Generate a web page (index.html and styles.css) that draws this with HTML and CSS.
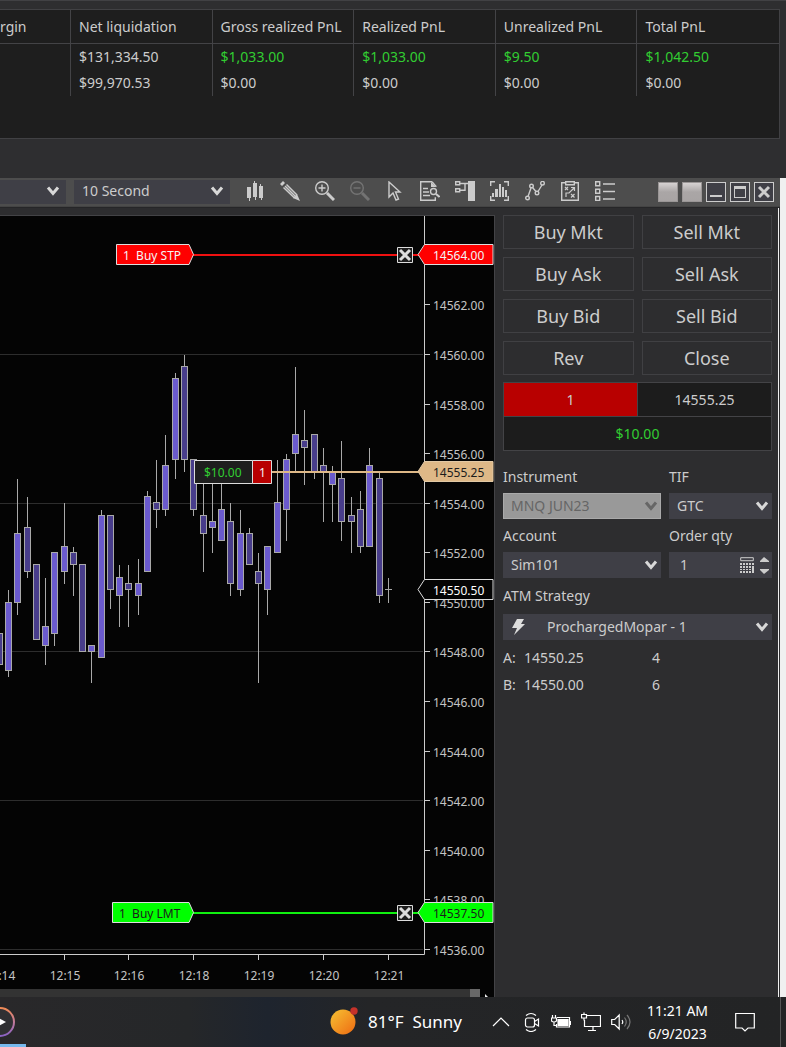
FILE: index.html
```html
<!DOCTYPE html>
<html lang="en">
<head>
<meta charset="utf-8">
<title>Chart Trader</title>
<link rel="stylesheet" href="styles.css">
</head>
<body>
<div class="desktop">
  <section class="accounts">
    <div class="accounts-box">
      <table class="accounts-table">
        <colgroup><col class="col-first"><col><col><col><col><col></colgroup>
        <thead><tr><th>rgin</th><th>Net liquidation</th><th>Gross realized PnL</th><th>Realized PnL</th><th>Unrealized PnL</th><th>Total PnL</th></tr></thead>
        <tbody>
          <tr><td></td><td>$131,334.50</td><td class="gain">$1,033.00</td><td class="gain">$1,033.00</td><td class="gain">$9.50</td><td class="gain">$1,042.50</td></tr>
          <tr><td></td><td>$99,970.53</td><td>$0.00</td><td>$0.00</td><td>$0.00</td><td>$0.00</td></tr>
        </tbody>
      </table>
    </div>
  </section>

  <div class="stage">
    <main class="window">
      <header class="toolbar">
        <span class="picker picker-symbol"><select aria-label="Instrument selector"><option></option></select><svg class="chev" viewBox="0 0 12 10"><path d="M1 1.500l5 6 5-6"/></svg></span>
        <span class="picker picker-interval"><select aria-label="Interval"><option>10 Second</option></select><svg class="chev" viewBox="0 0 12 10"><path d="M1 1.500l5 6 5-6"/></svg></span>
        <div class="tools">
          <button aria-label="Chart style"><svg viewBox="0 0 20 20"><path class="fill" d="M2 6h4v11H5v3H4v-3H2zM8 2h1V0h1v2h2v14h-1v3h-1v-3H8zM15 3h1v2h2v12h-1v2h-1v-2h-2V5h1z"/></svg></button>
          <button aria-label="Drawing tools"><svg viewBox="0 0 20 20"><path d="M3.500 6.500L14.500 17M6.500 3.500L17 14M5 5l11 11" stroke-width="1.500"/><path class="fill" d="M0 3l3-3 2 2-3 3zM17 13l3 7-7-3z"/></svg></button>
          <button aria-label="Zoom in"><svg viewBox="0 0 20 20"><circle cx="7" cy="7" r="6.300"/><path d="M7 3.500v7M3.500 7h7"/><path d="M12 12l7 7" stroke-width="3"/></svg></button>
          <button aria-label="Zoom out" disabled><svg viewBox="0 0 20 20"><circle cx="7" cy="7" r="6.300"/><path d="M3.500 7h7"/><path d="M12 12l7 7" stroke-width="3"/></svg></button>
          <button aria-label="Cursor"><svg viewBox="0 0 20 20"><path d="M4 1v15l4-4 3 7 2.500-1-3-7H15z"/></svg></button>
          <button aria-label="Data box"><svg viewBox="0 0 20 20"><path d="M12 .700H.700v18.600h14.600v-3M12 .700l4.300 5"/><path class="fill" d="M11 1l5 5h-5z"/><path d="M3 7.500h5M3 11h6M3 14.500h7"/><circle cx="13.500" cy="10.500" r="3"/><path d="M16 13l3.500 3" stroke-width="2"/></svg></button>
          <button aria-label="Chart trader"><svg viewBox="0 0 20 20"><path d="M.700.700h4v3h-4zM.700 7.700h4v3h-4zM5 2.500h8M5 9.300h5V3"/><path class="fill" d="M13 0h7v20h-7z"/></svg></button>
          <button aria-label="Data series"><svg viewBox="0 0 20 20"><path d="M.700 5V.700H5M14 .700h4.300V5M.700 15v4.300H5M14 19.300h4.300V15"/><path class="fill" d="M2 12h2v4H2zM5 8h3v8H5zM9 3h2v13H9zM12 6h2v10h-2zM15 9h2v7h-2z"/></svg></button>
          <button aria-label="Indicators"><svg viewBox="0 0 20 20"><circle cx="2.500" cy="17" r="1.800"/><circle cx="6.500" cy="5" r="1.800"/><circle cx="12" cy="12" r="1.800"/><circle cx="17.500" cy="2.200" r="1.800"/><path d="M3.200 15L6 7M7.500 6.500l3.500 4M13 10.500l4-6.500"/></svg></button>
          <button aria-label="Strategies"><svg viewBox="0 0 20 20"><path d="M5 1.700H1.700v17.600h16.600V1.700H15M5.700.700h8.600v3H5.700z"/><path d="M5 6l3 3M8 6L5 9M11 13l3.500 3.500M14.500 13L11 16.500M6 16v-4h3l5-5M11 6.500h3.500V10" stroke-width="1.200"/></svg></button>
          <button aria-label="Properties"><svg viewBox="0 0 20 20"><path d="M.700.700h4v4h-4zM.700 8.200h4v4h-4zM.700 15.500h4v4h-4zM8 3h12M8 10.500h12M8 18h12"/></svg></button>
        </div>
        <div class="window-buttons">
          <button class="link" aria-label="Instrument link"></button>
          <button class="link" aria-label="Interval link"></button>
          <button class="frame" aria-label="Minimize"><svg viewBox="0 0 18 18"><path class="fill" d="M3 12h12v2H3z"/></svg></button>
          <button class="frame" aria-label="Maximize"><svg viewBox="0 0 18 18"><path class="fill" fill-rule="evenodd" d="M3 3h12v12H3zM4 6v8h10V6z"/></svg></button>
          <button class="frame" aria-label="Close window"><svg viewBox="0 0 18 18"><path d="M4 4l10 10M14 4L4 14" stroke-width="3"/></svg></button>
        </div>
      </header>

      <div class="workspace">
        <section class="chart">
          <svg class="plot" viewBox="0 216 494 773" preserveAspectRatio="xMaxYMin slice" role="img" aria-label="Price chart">
            <g id="grid"></g>
            <g id="candles"></g>
            <path class="axis" d="M424.500 216V954.500H0"/>
            <g id="axis-labels"></g>
            <path class="last-tag" d="M418 589.500l6.500-10H493v20h-68.500z"/>
            <text class="last-text" x="433" y="595">14550.50</text>

            <path class="stop-line" d="M193 255H419"/>
            <path class="stop-tag" d="M116.500 244.500h72.500l4.500 10-4.500 10h-72.500z"/>
            <text class="light-text" x="123" y="260">1&#160; Buy STP</text>
            <path class="stop-tag" d="M418 254.500l6.500-10H493v20h-68.500z"/>
            <text class="light-text" x="433" y="260">14564.00</text>
            <g class="cancel"><path class="cancel-box" d="M397.500 247.500h15v15h-15z"/><path d="M400 250l10 10M410 250l-10 10"/></g>

            <path class="position-line" d="M272 472H419"/>
            <path class="position-box" d="M194.500 460.500h58v23h-58z"/>
            <path class="position-qty" d="M252.500 460.500h19v23h-19z"/>
            <text class="gain-text" x="204" y="477">$10.00</text>
            <text class="light-text" x="259" y="477">1</text>
            <path class="position-tag" d="M418 471.500l6.500-10H493v20h-68.500z"/>
            <text class="dark-text" x="433" y="477">14555.25</text>

            <path class="limit-line" d="M193 913H419"/>
            <path class="limit-tag" d="M112.500 902.500h76.500l4.500 10-4.500 10h-76.500z"/>
            <text class="dark-text" x="119" y="918">1&#160; Buy LMT</text>
            <path class="limit-tag" d="M418 912.500l6.500-10H493v20h-68.500z"/>
            <text class="dark-text" x="433" y="918">14537.50</text>
            <g class="cancel"><path class="cancel-box" d="M397.500 905.500h15v15h-15z"/><path d="M400 908l10 10M410 908l-10 10"/></g>
          </svg>
          <div class="scrollbar"><span class="thumb"></span><svg class="scroll-arrow" viewBox="0 0 14 8"><path d="M5 5l4 4H5z" fill="#eee"/></svg></div>
        </section>

        <aside class="trader">
          <div class="order-buttons">
            <button>Buy Mkt</button><button>Sell Mkt</button>
            <button>Buy Ask</button><button>Sell Ask</button>
            <button>Buy Bid</button><button>Sell Bid</button>
            <button>Rev</button><button>Close</button>
          </div>
          <div class="position">
            <div class="qty">1</div><div class="price">14555.25</div>
            <div class="pnl">$10.00</div>
          </div>
          <form class="fields">
            <label for="instrument">Instrument</label><label for="tif">TIF</label>
            <span class="picker"><select id="instrument" disabled><option>MNQ JUN23</option></select><svg class="chev chev-off" viewBox="0 0 12 10"><path d="M1 1.500l5 6 5-6"/></svg></span>
            <span class="picker"><select id="tif"><option>GTC</option></select><svg class="chev" viewBox="0 0 12 10"><path d="M1 1.500l5 6 5-6"/></svg></span>
            <label for="account">Account</label><label for="qty">Order qty</label>
            <span class="picker"><select id="account"><option>Sim101</option></select><svg class="chev" viewBox="0 0 12 10"><path d="M1 1.500l5 6 5-6"/></svg></span>
            <span class="picker stepper"><input id="qty" type="text" value="1"><svg class="calc" viewBox="0 0 30 18"><path d="M.700 1.700h12.600v3H.700z" fill="none" stroke="#ccc"/><path d="M0 7h2v2H0zM3 7h2v2H3zM6 7h2v2H6zM9 7h2v2H9zM12 7h2v2h-2zM0 10h2v2H0zM3 10h2v2H3zM6 10h2v2H6zM9 10h2v2H9zM12 10h2v7h-2zM0 13h2v1H0zM3 13h2v1H3zM6 13h2v1H6zM9 13h2v1H9zM0 15h2v2H0zM3 15h2v2H3zM6 15h2v2H6zM9 15h2v2H9zM20 5l4-4 5 4v1h-9zM20 13h9v1l-5 4-4-4z" fill="#ccc"/></svg></span>
            <label class="wide" for="atm">ATM Strategy</label>
            <span class="picker wide atm"><svg class="bolt" viewBox="0 0 14 16"><path d="M5 0h7L9 5h4L2 16l3-7H0z" fill="#ddd"/></svg><select id="atm"><option>ProchargedMopar - 1</option></select><svg class="chev" viewBox="0 0 12 10"><path d="M1 1.500l5 6 5-6"/></svg></span>
          </form>
          <table class="quotes">
            <tr><th>A:</th><td>14550.25</td><td>4</td></tr>
            <tr><th>B:</th><td>14550.00</td><td>6</td></tr>
          </table>
        </aside>
      </div>
    </main>
    <div class="backdrop"></div>
  </div>

  <footer class="taskbar">
    <button class="app" aria-label="Media player"><svg viewBox="0 0 26 50"><defs><linearGradient id="ring" x1="0" y1="0" x2="0" y2="1"><stop offset="0" stop-color="#f08a55"/><stop offset=".5" stop-color="#c17a9a"/><stop offset="1" stop-color="#8b62c4"/></linearGradient></defs><circle cx="0" cy="25" r="14" fill="#303033" stroke="url(#ring)" stroke-width="2"/><path d="M-3 20l9 5-9 5z" fill="#fff"/><path d="M0 47h26v3H0z" fill="#76b9ed"/></svg></button>
    <button class="weather"><svg viewBox="0 0 30 30"><defs><linearGradient id="sun" x1="0" y1="0" x2="1" y2="1"><stop offset="0" stop-color="#f6c233"/><stop offset="1" stop-color="#ee6a12"/></linearGradient></defs><circle cx="13" cy="15" r="12.500" fill="url(#sun)"/><circle cx="24" cy="4" r="3.700" fill="#c5322a"/></svg><span>81°F&#160; Sunny</span></button>
    <div class="tray">
      <button aria-label="Show hidden icons"><svg viewBox="0 0 20 20"><path d="M2 14l8-8 8 8"/></svg></button>
      <button aria-label="Meet now"><svg viewBox="0 0 20 20"><rect x="4.500" y="6" width="9" height="9" rx="2"/><path d="M13.500 9.500l4-2.500v7l-4-2.500M5 3.500q5-4 10 0M5 17.500q5 4 10 0"/></svg></button>
      <button aria-label="Battery"><svg viewBox="0 0 20 20"><path d="M6 5.500h12.500v9.500H5.500v-3M1.500 3v3M4.500 3v3M.500 6h5v3q-2.500 2-5 0zM3 10v3.500h3M19.500 9v4"/><path d="M7 7.500h10v6H7z" fill="#fff"/></svg></button>
      <button aria-label="Network"><svg viewBox="0 0 20 20"><path d="M6 3.500h13.500v11H3.500V8M12 14.500V18M7 18.500h8M.500 2.500h5V6h-5zM3 6v2.500M3 .500v2"/></svg></button>
      <button aria-label="Volume"><svg viewBox="0 0 20 20"><path d="M.700 7.500h3l4.500-4.500v14L3.700 12.500h-3zM11 8q1.500 2 0 4"/><path d="M13.500 5.500q3.500 4.500 0 9M16 3q6 7 0 14" stroke="#777"/></svg></button>
    </div>
    <div class="clock"><time>11:21 AM</time><time>6/9/2023</time></div>
    <button class="notice" aria-label="Notifications"><svg viewBox="0 0 20 20"><path d="M.700 1.500h18.600v14.500H13l-3 3-3-3H.700z"/></svg></button>
    <div class="peek"></div>
  </footer>
</div>
<script src="chart.js"></script>
</body>
</html>
```

FILE: styles.css
```css
* { box-sizing: border-box; }
body { margin: 0; background: #2d2d2f; color: #ccc; font: 14px/20px "Noto Sans", "Open Sans", sans-serif; }
button, select, input { font: inherit; color: inherit; margin: 0; padding: 0; border: 0; background: none; }
svg { display: block; }

.desktop { display: flex; flex-direction: column; min-height: 100vh; overflow: hidden; }

.accounts { padding: 8px 6px 39px 0; border-top: 1px solid #414144; background: #2e2e30; }
.accounts-box { height: 130px; border: 1px solid #414144; border-left: 0; background: #1e1e1e; }
.accounts-table { width: 100%; table-layout: fixed; border-collapse: separate; border-spacing: 0; }
.accounts-table .col-first { width: 71px; }
.accounts-table th, .accounts-table td { height: 26px; padding: 0 0 0 8px; border-right: 1px solid #434346; text-align: left; font-weight: 400; white-space: nowrap; }
.accounts-table th { height: 34px; border-bottom: 1px solid #434346; }
.accounts-table th:first-child { padding-left: 0; }
.accounts-table th:last-child, .accounts-table td:last-child { border-right: 0; }
.accounts-table .gain { color: #32cd32; }

.stage { flex: 1; display: flex; }
.window { flex: 1; min-width: 0; display: flex; flex-direction: column; }
.backdrop { width: 6px; background: #f0f0f0; }

.toolbar { display: flex; align-items: center; height: 29px; padding-right: 6px; background: #4d4d4d; border-bottom: 1px solid #444; }
.picker { position: relative; display: block; height: 26px; background: #3f3f46; }
.picker select { width: 100%; height: 100%; padding-left: 8px; appearance: none; outline: 0; }
.picker select:disabled { background: #999; color: #666; opacity: 1; border: 1px solid #aaa; padding-left: 7px; }
.chev { position: absolute; right: 4px; top: 8px; width: 12px; height: 10px; overflow: visible; fill: none; stroke: #d8d8d8; stroke-width: 3; pointer-events: none; }
.chev-off { stroke: #666; }
.toolbar .picker { height: 24px; }
.toolbar .picker select { padding-bottom: 2px; }
.toolbar .chev { right: 7px; top: 6px; }
.picker-symbol { width: 66px; margin-right: 8px; }
.picker-interval { width: 156px; margin-right: 15px; }
.tools { display: flex; gap: 15px; margin-right: auto; padding-bottom: 2px; }
.tools button, .tools svg { width: 20px; height: 20px; }
.tools svg, .window-buttons svg { fill: none; stroke: #ccc; stroke-width: 1.4; }
.tools .fill, .window-buttons .fill { fill: #ccc; stroke: none; }
.tools button:disabled { opacity: .3; }
.window-buttons { display: flex; gap: 4px; }
.window-buttons button { width: 20px; height: 20px; }
.window-buttons .link { background: linear-gradient(#d6d2d2, #aaa6a6 50%, #a8a4a4); border: 1px solid #9a9696; }
.window-buttons .frame { border: 1px solid #ccc; background: #3f3f46; }

.workspace { flex: 1; display: flex; border-top: 1px solid #262628; }
.chart { flex: 1; min-width: 0; display: flex; flex-direction: column; margin-top: 7px; border-top: 1px solid #434346; border-right: 1px solid #434346; background: #040404; }
.plot { width: 100%; flex: 1; min-height: 0; font-size: 12px; fill: #c4c4c4; }
.scrollbar { display: flex; justify-content: flex-end; height: 8px; background: #333; }
.thumb { width: 10px; background: #686868; }
.scroll-arrow { width: 14px; height: 8px; background: #040404; }

.gridline { stroke: #2d2d2d; }
.axis, .tick { stroke: #ccc; fill: none; }
.wick { stroke: #a9a9a9; }
.body-up { fill: #6a5acd; stroke: #a9a9a9; }
.body-down { fill: #483d8b; stroke: #a9a9a9; }
.time { text-anchor: middle; }
.light-text { fill: #f4f4f4; }
.dark-text { fill: #1c1c1c; }
.gain-text { fill: #32cd32; }
.last-text { fill: #fff; }
.last-tag { fill: #040404; stroke: #ddd; }
.stop-tag { fill: #f00; stroke: #ddd; }
.stop-line { stroke: #f01010; stroke-width: 2; }
.limit-tag { fill: #0f0; stroke: #ddd; }
.limit-line { stroke: #10f010; stroke-width: 2; }
.position-tag { fill: #deb887; stroke: #e2c8a4; }
.position-line { stroke: #deb887; stroke-width: 2; }
.position-box { fill: #1e1e1e; stroke: #ddd; }
.position-qty { fill: #b80000; stroke: #ddd; }
.cancel { stroke: #ddd; stroke-width: 3; }
.cancel-box { fill: #1e1e1e; stroke-width: 1; }

.trader { width: 284px; padding: 7px 6px 8px 8px; border-right: 1px solid #f0f0f0; margin-right: 1px; background: #2d2d2f; }
.order-buttons { display: grid; grid-template-columns: 1fr 1fr; gap: 8px; }
.order-buttons button { height: 34px; border: 1px solid #404043; font-size: 18px; line-height: 24px; }
.position { display: grid; grid-template-columns: 1fr 1fr; gap: 1px; margin-top: 7px; padding: 1px; background: #434346; text-align: center; line-height: 33px; }
.position div { background: #1c1c1c; }
.position .qty { background: #b80000; }
.position .pnl { grid-column: 1 / 3; color: #32cd32; }
.fields { display: grid; grid-template-columns: 158px 1fr; column-gap: 8px; margin-top: 10px; }
.fields label { height: 32px; line-height: 31px; }
.fields .picker { margin-bottom: 1px; }
.fields .wide { grid-column: 1 / 3; }
.fields label.wide { height: 35px; line-height: 34px; }
.stepper input { width: 60px; height: 100%; padding: 0 0 1px 11px; }
.calc { position: absolute; right: 2px; top: 4px; width: 30px; height: 18px; }
.bolt { position: absolute; left: 9px; top: 5px; width: 14px; height: 16px; }
.picker.atm select { padding-left: 44px; }
.quotes { width: 100%; margin-top: 3px; border-spacing: 0; }
.quotes th, .quotes td { height: 27px; padding: 0; text-align: left; font-weight: 400; }
.quotes th { width: 21px; }
.quotes td:nth-child(2) { width: 128px; }

.taskbar { display: flex; align-items: center; height: 50px; color: #fff; background: linear-gradient(90deg, #29282a, #252729 24%, #1e242e 34%, #242527 47%, #232425); }
.taskbar svg { fill: none; stroke: #fff; stroke-width: 1.2; }
.app { width: 26px; height: 50px; margin-right: auto; }
.taskbar .app svg, .taskbar .weather svg { stroke: none; }
.weather { display: flex; align-items: center; gap: 8px; margin-right: 29px; font-size: 17px; line-height: 24px; }
.weather svg { width: 30px; height: 30px; }
.tray { display: flex; gap: 10px; margin-right: 16px; }
.tray button, .tray svg, .notice, .notice svg { width: 20px; height: 20px; }
.clock { display: flex; flex-direction: column; align-items: center; width: 61px; margin-right: 27px; padding-bottom: 1px; line-height: 23px; white-space: nowrap; }
.peek { width: 6px; height: 50px; margin-left: 25px; border-left: 1px solid #555; }
```

FILE: chart.js
```js
const NS = "http://www.w3.org/2000/svg";

function add(parent, name, attrs, text) {
  const el = document.createElementNS(NS, name);
  for (const key in attrs) el.setAttribute(key, attrs[key]);
  if (text) el.textContent = text;
  document.getElementById(parent).appendChild(el);
}

// x, high, body top, body bottom, low, rising
const bars = [
  [-1, 633, 633, 664, 664, 0], [8, 590, 602, 670, 677, 1], [17, 479, 533, 602, 615, 1],
  [27, 497, 527, 571, 578, 0], [36, 564, 564, 639, 639, 0], [45, 578, 626, 645, 665, 1],
  [54, 552, 552, 633, 646, 1], [64, 503, 546, 571, 584, 1], [73, 547, 552, 564, 596, 0],
  [82, 564, 564, 651, 651, 0], [91, 645, 645, 651, 683, 1], [101, 510, 515, 657, 657, 1],
  [110, 515, 515, 589, 609, 0], [119, 565, 577, 595, 627, 1], [128, 565, 583, 589, 627, 0],
  [138, 559, 583, 595, 615, 1], [147, 491, 496, 571, 571, 1], [156, 460, 502, 509, 528, 0],
  [165, 435, 465, 509, 516, 1], [175, 373, 378, 459, 479, 1], [184, 355, 366, 459, 472, 0],
  [193, 459, 459, 509, 516, 0], [203, 460, 515, 533, 572, 0], [212, 460, 521, 527, 553, 1],
  [221, 460, 509, 540, 540, 1], [230, 503, 521, 583, 596, 0], [240, 510, 533, 589, 596, 1],
  [249, 528, 533, 564, 564, 0], [258, 553, 571, 583, 683, 0], [267, 546, 546, 589, 615, 1],
  [277, 460, 502, 552, 552, 1], [286, 454, 459, 509, 541, 1], [295, 367, 434, 453, 472, 1],
  [304, 410, 440, 447, 485, 0], [314, 434, 434, 471, 479, 0], [323, 448, 465, 471, 522, 0],
  [332, 466, 471, 484, 522, 1], [341, 441, 478, 521, 541, 0], [351, 497, 515, 521, 553, 0],
  [360, 491, 509, 546, 553, 0], [369, 448, 465, 546, 546, 1], [379, 472, 478, 595, 603, 0]
];

for (const [x, high, top, bottom, low, rising] of bars) {
  add("candles", "path", { class: "wick", d: `M${x + 0.5} ${high}V${low}` });
  add("candles", "rect", {
    class: rising ? "body-up" : "body-down",
    x: x - 2.5, y: top + 0.5, width: 6, height: bottom - top
  });
}
add("candles", "path", { class: "wick", d: "M388.5 578V603M385 589.5H392" });

for (let price = 14562; price >= 14536; price -= 2) {
  const y = Math.floor(354.5 + (14560 - price) * 24.79) + 0.5;
  add("axis-labels", "path", { class: "tick", d: `M425 ${y}H430` });
  add("axis-labels", "text", { x: 433, y: y + 5.5 }, price + ".00");
  if ((14560 - price) % 6 === 0) add("grid", "path", { class: "gridline", d: `M0 ${y}H423` });
}

const times = [[-1, "12:14"], [64, "12:15"], [128, "12:16"], [193, "12:18"], [258, "12:19"], [323, "12:20"], [388, "12:21"]];
for (const [x, label] of times) {
  add("axis-labels", "path", { class: "tick", d: `M${x + 0.5} 955V960` });
  add("axis-labels", "text", { class: "time", x: x + 1, y: 980 }, label);
}
```
